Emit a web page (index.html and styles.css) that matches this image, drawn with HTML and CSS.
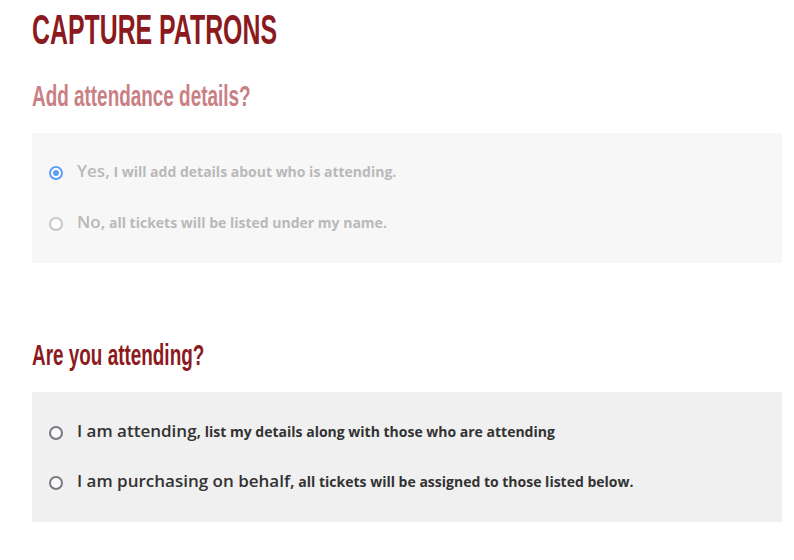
FILE: index.html
```html
<!DOCTYPE html>
<html>
<head>
<meta charset="utf-8">
<link rel="stylesheet" href="styles.css">
</head>
<body>
<div class="page">
  <h1 class="title"><span class="squeeze squeeze-title">CAPTURE PATRONS</span></h1>
  <h2 class="subtitle muted"><span class="squeeze squeeze-sub">Add attendance details?</span></h2>
  <div class="panel panel-light">
    <label class="option disabled">
      <span class="radio radio-checked"></span>
      <span class="label"><span class="lead">Yes,</span> I will add details about who is attending.</span>
    </label>
    <label class="option disabled">
      <span class="radio radio-disabled"></span>
      <span class="label"><span class="lead">No,</span> all tickets will be listed under my name.</span>
    </label>
  </div>
  <h2 class="subtitle second"><span class="squeeze squeeze-sub">Are you attending?</span></h2>
  <div class="panel panel-grey">
    <label class="option">
      <span class="radio"></span>
      <span class="label"><span class="lead">I am attending,</span> list my details along with those who are attending</span>
    </label>
    <label class="option">
      <span class="radio"></span>
      <span class="label"><span class="lead">I am purchasing on behalf,</span> all tickets will be assigned to those listed below.</span>
    </label>
  </div>
</div>
</body>
</html>
```

FILE: styles.css
```css
* { box-sizing: border-box; }
html, body { margin: 0; padding: 0; background: #fff; }
.page {
  padding: 0 12px 0 32px;
  font-family: "Open Sans", "Liberation Sans", sans-serif;
}
.title, .subtitle {
  font-family: "Liberation Sans", sans-serif;
  font-weight: 700;
  margin: 0;
  white-space: nowrap;
}
.squeeze {
  display: inline-block;
  transform-origin: left center;
}
.title {
  font-size: 42px;
  line-height: 42px;
  color: #8b1a20;
  padding-top: 9px;
}
.squeeze-title { transform: scaleX(0.592); }
.subtitle {
  font-size: 29px;
  line-height: 29px;
  color: #8b1a20;
  margin: 0 0 22px;
}
.squeeze-sub { transform: scaleX(0.652); }
.subtitle.muted {
  color: #c98084;
  margin-top: 31px;
}
.subtitle.second { margin-top: 78px; }
.panel {
  height: 130px;
  padding: 28px 17px 27px;
  display: flex;
  flex-direction: column;
  gap: 27px;
}
.panel-light { background: #f7f7f7; }
.panel-grey { background: #f0f0f0; padding-top: 29px; gap: 26px; }
.option {
  display: flex;
  align-items: center;
  height: 24px;
  gap: 14px;
  font-size: 14px;
  font-weight: 700;
  color: #333;
  white-space: nowrap;
}
.label { padding-bottom: 5px; }
.option .lead { font-size: 17px; font-weight: 600; }
.option.disabled { color: #b9b9b9; }
.radio {
  width: 14px;
  height: 14px;
  border-radius: 50%;
  border: 2px solid #7a7880;
  background: #fafafa;
  flex: none;
  position: relative;
}
.radio-disabled { border-color: #c6c6c6; background: #fff; }
.radio-checked { border-color: #5e9ef0; background: #fff; }
.radio-checked::after {
  content: "";
  position: absolute;
  left: 50%;
  top: 50%;
  width: 6px;
  height: 6px;
  margin: -3px 0 0 -3px;
  border-radius: 50%;
  background: #5e9ef0;
}
```
